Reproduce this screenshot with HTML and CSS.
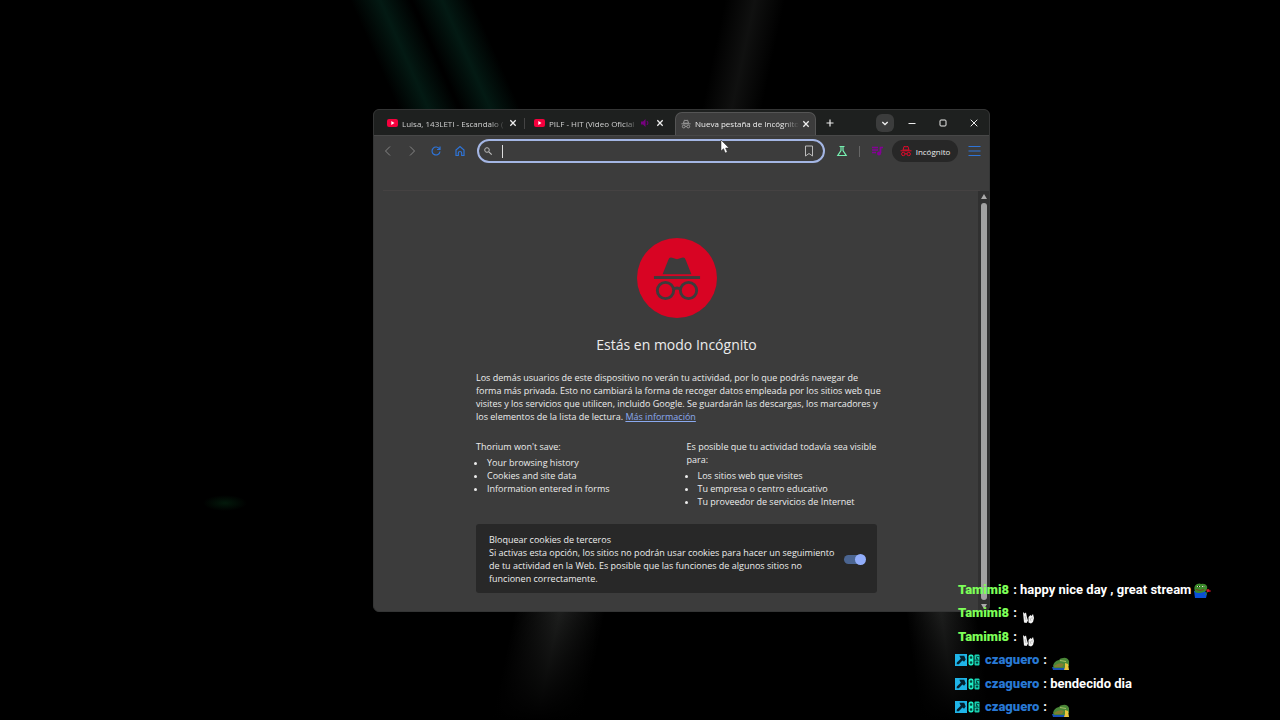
FILE: index.html
```html
<!DOCTYPE html>
<html lang="es">
<head>
<meta charset="utf-8">
<title>Nueva pestaña de Incógnito</title>
<link rel="stylesheet" href="styles.css">
</head>
<body>
<svg width="0" height="0" class="defs" aria-hidden="true">
  <symbol id="yt" viewBox="0 0 11 10"><rect y="1" width="11" height="8" rx="2" fill="#f5003d"/><path d="M4.3 3v4l3.2-2z" fill="#fff"/></symbol>
  <symbol id="x" viewBox="0 0 10 10"><path d="M2.3 2.3l5.4 5.4M7.7 2.3L2.3 7.7" stroke="currentColor" stroke-width="1.3" fill="none"/></symbol>
  <symbol id="spy" viewBox="0 0 50 46">
    <path d="M10 19L16 4q1-3 4-2l5 1.500l5-1.500q3-1 4 2l6 15z" fill="currentColor"/>
    <rect x="1" y="21" width="48" height="3" fill="currentColor"/>
    <g fill="none" stroke="currentColor" stroke-width="3"><circle cx="13" cy="36" r="8.500"/><circle cx="37" cy="36" r="8.500"/><path d="M21 35q4-3 8 0"/></g>
  </symbol>
  <symbol id="spy-small" viewBox="0 0 12 12">
    <path d="M3 5L4 1.500q2 .6 4 0L9 5z" fill="none" stroke="currentColor"/>
    <g fill="none" stroke="currentColor"><path d="M.5 5.800h11M5 9q1-.8 2 0"/><circle cx="3.300" cy="9" r="1.700"/><circle cx="8.700" cy="9" r="1.700"/></g>
  </symbol>
  <symbol id="hammer" viewBox="0 0 11 11"><rect width="11" height="11" fill="#1fb4e8"/><path d="M4 1.500h4.500L9.800 5 8.300 7 6.800 6 3.500 9.500 1.500 9.300 1.700 7.800 5.300 4.300z" fill="#04202e"/></symbol>
  <symbol id="dna" viewBox="0 0 12 12"><rect x=".5" y=".5" width="5" height="11" rx="2" fill="#1ff0c8"/><rect x="6.500" y=".5" width="5" height="11" rx="1" fill="#17cfb0"/><path d="M2.300 2.800h1.500v1.500H2.300zM2.300 7.800h1.500v1.500H2.300zM8.300 2.500h3M8.500 3v2.200h1.500M8.300 8h1.500v1.200H8.300zM6 6.200h5.500" fill="#033b35" stroke="#033b35" stroke-width=".8"/></symbol>
  <symbol id="frog-heart" viewBox="0 0 18 16"><path d="M1 8h11l2 3-1 4H2z" fill="#0a4fd6"/><path d="M2 9Q0 3 4 1q3-1 4 0 4-1 6 2 1 4-3 6-6 2-9 0z" fill="#3b8a2b"/><path d="M4 3.500h3M9 3.500h3" stroke="#dce8c8"/><path d="M5 3.500h1M10.500 3.500h1" stroke="#111"/><path d="M3 6.500q4 2 8 0" stroke="#7b3b20" fill="none"/><path d="M12 12l3-4" stroke="#3b8a2b"/><circle cx="15" cy="7.500" r="1.600" fill="#d51b2c"/><circle cx="16.800" cy="8" r="1" fill="#a50f20"/></symbol>
  <symbol id="hands" viewBox="0 0 14 13"><path d="M2 1l1.500 1.500L5 1.500l1 5 1 3-1.500 2.500-2.500-.5-.5-5zM7.500 6l2-2 1 1 1.500-2 1 4-1 4-2 1.500-2.500-1z" fill="#f2f2f2"/><path d="M4 5l1 4M9 7l1 3M11 6v2" stroke="#999" stroke-width=".6"/></symbol>
  <symbol id="frog-lay" viewBox="0 0 18 13"><path d="M0 10h15l2 3H1z" fill="#174fb5"/><path d="M1 9Q2 4 7 3q1-2 4-2 4-1 6 3v5l-5 2H2z" fill="#4a8738"/><path d="M2 9q5-4 10-2l-2 3H3z" fill="#827c32"/><path d="M8 3.500l6 1" stroke="#a5bf66"/><path d="M13 6l3 1 1 6h-5l1-3z" fill="#eac43d"/></symbol>
</svg>

<svg class="wallpaper" viewBox="0 0 1280 720" preserveAspectRatio="none" aria-hidden="true">
  <defs>
    <linearGradient id="green"><stop offset="0" stop-color="#042018" stop-opacity="0"/><stop offset=".5" stop-color="#042018" stop-opacity=".8"/><stop offset="1" stop-color="#042018" stop-opacity="0"/></linearGradient>
    <linearGradient id="gray"><stop offset="0" stop-color="#202120" stop-opacity="0"/><stop offset=".5" stop-color="#202120"/><stop offset="1" stop-color="#202120" stop-opacity="0"/></linearGradient>
    <linearGradient id="dark" x1="0" y1="0" x2="0" y2="1"><stop offset="0" stop-color="#000" stop-opacity="0"/><stop offset="1" stop-color="#000"/></linearGradient>
    <radialGradient id="spot"><stop offset="0" stop-color="#03190b"/><stop offset="1" stop-color="#03190b" stop-opacity="0"/></radialGradient>
  </defs>
  <rect x="350" y="0" width="60" height="130" fill="url(#green)" transform="skewX(24)"/>
  <rect x="412" y="0" width="60" height="130" fill="url(#green)" transform="skewX(24)"/>
  <rect x="725" y="0" width="60" height="130" fill="url(#gray)" opacity=".5" transform="skewX(-12)"/>
  <rect x="645" y="600" width="90" height="120" fill="url(#gray)" transform="skewX(-12)"/>
  <rect x="820" y="600" width="70" height="120" fill="url(#gray)" transform="skewX(8)"/>
  <rect x="440" y="600" width="560" height="120" fill="url(#dark)"/>
  <ellipse cx="225" cy="503" rx="22" ry="8" fill="url(#spot)"/>
</svg>

<main class="window">
  <header class="tabs">
    <div class="tab"><svg class="fav"><use href="#yt"/></svg><span class="title">Luisa, 143LETI - Escandalo (</span><button class="close" aria-label="Cerrar pestaña"><svg><use href="#x"/></svg></button></div>
    <div class="tab split"><svg class="fav"><use href="#yt"/></svg><span class="title">PILF - HIT (Video Oficial</span>
      <svg class="sound" viewBox="0 0 10 10"><path d="M1 3.500h2L5.500 1v8L3 6.500H1z" fill="#76007f"/><path d="M7 3q2 2 0 4" stroke="#76007f" fill="none"/></svg>
      <button class="close" aria-label="Cerrar pestaña"><svg><use href="#x"/></svg></button></div>
    <div class="tab active"><svg class="fav"><use href="#spy-small"/></svg><span class="title">Nueva pestaña de Incógnito</span><button class="close" aria-label="Cerrar pestaña"><svg><use href="#x"/></svg></button></div>
    <button class="plus" aria-label="Nueva pestaña"><svg viewBox="0 0 10 10"><path d="M5 1.500v7M1.500 5h7" stroke="currentColor" stroke-width="1.200"/></svg></button>
    <div class="controls">
      <button class="search-tabs" aria-label="Buscar pestañas"><svg viewBox="0 0 10 10"><path d="M2.300 4L5 6.500 7.700 4" stroke="currentColor" stroke-width="1.400" fill="none"/></svg></button>
      <button aria-label="Minimizar"><svg viewBox="0 0 10 10"><path d="M1.500 5.500h7" stroke="currentColor"/></svg></button>
      <button aria-label="Maximizar"><svg viewBox="0 0 10 10"><rect x="2" y="2" width="6" height="6" rx="1" fill="none" stroke="currentColor"/></svg></button>
      <button aria-label="Cerrar"><svg viewBox="0 0 10 10"><path d="M1.700 1.700l6.600 6.600M8.300 1.700L1.700 8.300" stroke="currentColor"/></svg></button>
    </div>
  </header>

  <nav class="toolbar">
    <button class="dim" aria-label="Atrás"><svg viewBox="0 0 12 12"><path d="M8 1.500L3.500 6 8 10.500" fill="none" stroke="currentColor"/></svg></button>
    <button class="dim" aria-label="Adelante"><svg viewBox="0 0 12 12"><path d="M4 1.500L8.500 6 4 10.500" fill="none" stroke="currentColor"/></svg></button>
    <button class="blue" aria-label="Recargar"><svg viewBox="0 0 12 12"><path d="M9.500 4A4 4 0 1 0 10 6.500M10 1.500V4.500H7" fill="none" stroke="currentColor" stroke-width="1.200"/></svg></button>
    <button class="blue" aria-label="Inicio"><svg viewBox="0 0 12 12"><path d="M2 10.500V5l4-3.500L10 5v5.500H7.700V8.200a1.700 1.700 0 0 0-3.400 0v2.300z" fill="none" stroke="currentColor" stroke-width="1.200"/></svg></button>
    <div class="omnibox">
      <svg viewBox="0 0 10 10"><circle cx="4" cy="4" r="2.300" fill="none" stroke="#bbb"/><path d="M5.800 5.800L8.700 8.700" stroke="#bbb" stroke-width="1.200"/></svg>
      <span class="caret"></span>
      <input type="text" aria-label="Barra de direcciones">
      <button aria-label="Añadir marcador"><svg viewBox="0 0 12 12"><path d="M2.500 1h7v10L6 8.500 2.500 11z" fill="none" stroke="#bbb"/></svg></button>
    </div>
    <button class="green" aria-label="Experimentos"><svg viewBox="0 0 12 12"><path d="M3.500 1.500h5M5 1.500v4L1.800 10.500h8.400L7 5.500v-4" fill="none" stroke="currentColor" stroke-width="1.200"/></svg></button>
    <span class="rule"></span>
    <button class="purple" aria-label="Control multimedia"><svg viewBox="0 0 12 12"><path d="M1 2.500h6M1 5h6M1 7.500h4M9.500 8V2.500H12" fill="none" stroke="currentColor" stroke-width="1.700"/><circle cx="8" cy="8.500" r="2" fill="currentColor"/></svg></button>
    <button class="profile"><svg><use href="#spy-small"/></svg>Incógnito</button>
    <button class="blue menu" aria-label="Menú"><svg viewBox="0 0 12 12"><path d="M0 1.500h12M0 6h12M0 10.500h12" stroke="currentColor"/></svg></button>
  </nav>
  <div class="bookmarks"></div>

  <div class="page">
    <section class="content">
      <div class="logo"><svg><use href="#spy"/></svg></div>
      <h1>Estás en modo Incógnito</h1>
      <p class="intro">Los demás usuarios de este dispositivo no verán tu actividad, por lo que podrás navegar de<br>forma más privada. Esto no cambiará la forma de recoger datos empleada por los sitios web que<br>visites y los servicios que utilicen, incluido Google. Se guardarán las descargas, los marcadores y<br>los elementos de la lista de lectura. <a href="#">Más información</a></p>
      <div class="columns">
        <div><p>Thorium <em>won't save:</em></p><ul><li>Your browsing history</li><li>Cookies and site data</li><li>Information entered in forms</li></ul></div>
        <div><p>Es posible que tu actividad <em>todavía sea visible</em><br>para:</p><ul><li>Los sitios web que visites</li><li>Tu empresa o centro educativo</li><li>Tu proveedor de servicios de Internet</li></ul></div>
      </div>
      <div class="cookies">
        <label for="block"><em>Bloquear cookies de terceros</em><br>Si activas esta opción, los sitios no podrán usar cookies para hacer un seguimiento<br>de tu actividad en la Web. Es posible que las funciones de algunos sitios no<br>funcionen correctamente.</label>
        <input id="block" class="switch" type="checkbox" role="switch" checked>
      </div>
    </section>
    <div class="scroll" aria-hidden="true"><i class="up"></i><i class="thumb"></i><i class="down"></i></div>
  </div>
</main>

<svg class="cursor" viewBox="0 0 10 14" aria-hidden="true"><path d="M1 0v11l2.500-2.300L5.300 13l2-.9L5.600 8H9z" fill="#fff" stroke="#222" stroke-width=".5"/></svg>

<aside class="chat">
  <div class="msg plain"><b class="lime">Tamimi8</b><span>: happy nice day , great stream</span><svg class="big"><use href="#frog-heart"/></svg></div>
  <div class="msg plain"><b class="lime">Tamimi8</b><span>:</span><svg class="hand"><use href="#hands"/></svg></div>
  <div class="msg plain"><b class="lime">Tamimi8</b><span>:</span><svg class="hand"><use href="#hands"/></svg></div>
  <div class="msg"><svg class="badge"><use href="#hammer"/></svg><svg class="badge"><use href="#dna"/></svg><b class="azure">czaguero</b><span>:</span><svg class="frog"><use href="#frog-lay"/></svg></div>
  <div class="msg"><svg class="badge"><use href="#hammer"/></svg><svg class="badge"><use href="#dna"/></svg><b class="azure">czaguero</b><span>: bendecido dia</span></div>
  <div class="msg"><svg class="badge"><use href="#hammer"/></svg><svg class="badge"><use href="#dna"/></svg><b class="azure">czaguero</b><span>:</span><svg class="frog"><use href="#frog-lay"/></svg></div>
</aside>
</body>
</html>
```
FILE: styles.css
```css
* { box-sizing: border-box; }
html, body { height: 100%; }
body {
  margin: 0;
  position: relative;
  overflow: hidden;
  background: #000;
  color: #ececec;
  font: 9px/13px "Open Sans", "Noto Sans", sans-serif;
}
button { display: flex; align-items: center; justify-content: center; padding: 0; border: 0; background: none; color: inherit; font: inherit; }
svg { display: block; flex: none; }
em { font-style: normal; font-weight: 500; }
.defs { position: absolute; }
.wallpaper { position: absolute; inset: 0; width: 100%; height: 100%; }

.window {
  position: absolute;
  inset: 109px 290px auto 373px;
  border: 1px solid #343535;
  border-radius: 6px;
  overflow: hidden;
  background: #3c3c3c;
}

.tabs { display: flex; align-items: flex-end; gap: 6px; height: 25px; padding-left: 7px; background: #1e201f; }
.tab { display: flex; align-items: center; position: relative; width: 141px; height: 23px; padding: 0 4px 1px 6px; color: #d0d0d0; font-size: 8px; }
.tab.active { background: #3c3c3c; border: 1px solid #555; border-bottom: 0; border-radius: 7px 7px 0 0; padding: 0 4px 1px 5px; color: #ececec; }
.tab.split::before { content: ""; position: absolute; left: -4px; top: 6px; width: 1px; height: 11px; background: #444; }
.fav { width: 11px; height: 10px; margin-right: 4px; }
.active .fav { width: 10px; color: #aaa; }
.title { flex: 1; min-width: 0; white-space: nowrap; -webkit-mask-image: linear-gradient(90deg, #000 85%, transparent); mask-image: linear-gradient(90deg, #000 85%, transparent); }
.sound { width: 10px; height: 10px; margin: 0 5px 0 2px; }
.close { width: 10px; height: 10px; margin-left: 2px; color: #eee; }
.sound + .close { margin-left: 0; }
.close svg, .plus svg, .controls svg { width: 10px; height: 10px; }
.plus { width: 16px; height: 24px; }
.controls { display: flex; align-items: center; gap: 5px; height: 24px; margin-left: auto; padding-right: 2px; }
.controls button { width: 26px; height: 18px; }
.controls .search-tabs { width: 18px; border-radius: 6px; background: #3b3c3c; }

.toolbar { display: flex; align-items: center; height: 31px; padding: 0 3px 0 2px; border-top: 1px solid #484848; }
.toolbar > button { width: 24px; height: 22px; }
.toolbar svg { width: 12px; height: 12px; }
.dim { color: #858585; }
.blue { color: #2e74d8; }
.green { color: #76efb0; }
.purple { color: #850096; }
.omnibox { display: flex; align-items: center; flex: 1; height: 24px; margin: 0 5px; padding: 0 8px 0 4px; border: 2px solid #a4b6e4; border-radius: 12px; }
.omnibox > svg { width: 10px; height: 10px; }
.caret { width: 1px; height: 13px; margin-left: 9px; background: #ddd; }
.omnibox input { flex: 1; min-width: 0; border: 0; outline: 0; background: none; color: inherit; font: inherit; }
.rule { width: 1px; height: 11px; margin: 0 5px; background: #666; }
.toolbar .profile { width: 66px; margin: 0 4px 0 3px; gap: 4px; border-radius: 11px; background: #272727; font-size: 8px; }
.profile svg { color: #e20a2b; }
.toolbar .menu svg { width: 13px; }
.bookmarks { height: 25px; margin: 0 9px; border-bottom: 1px solid #454242; }

.page { display: flex; }
.content { flex: 1; min-width: 0; padding: 47px 101px 18px 102px; }
.logo { display: flex; justify-content: center; align-items: center; width: 80px; height: 80px; margin: 0 auto; border-radius: 50%; background: #d80423; color: #3c3c3c; }
.logo svg { width: 48px; height: 46px; }
h1 { margin: 17px 0 16px; font-size: 14px; line-height: 20px; font-weight: 400; text-align: center; }
p { margin: 0; }
.intro { white-space: nowrap; }
a { color: #8aa9ef; }
.columns { display: grid; grid-template-columns: 1fr 1fr; gap: 20px; margin: 17px 0 16px; white-space: nowrap; }
ul { margin: 3px 0 0; padding-left: 11px; }
.cookies { display: flex; align-items: center; justify-content: space-between; padding: 9px 12px 8px 13px; border-radius: 3px; background: #282828; white-space: nowrap; }
.switch { appearance: none; position: relative; width: 21px; height: 9px; margin: 0; border-radius: 5px; background: #4b6591; }
.switch::after { content: ""; position: absolute; right: -1px; top: -1px; width: 11px; height: 11px; border-radius: 50%; background: #91adfa; }
.scroll { display: flex; flex: none; flex-direction: column; align-items: center; gap: 4px; width: 11px; padding: 3px 0 2px; background: #303030; }
.up, .down { border: 3px solid transparent; }
.up { border-top: 0; border-bottom: 5px solid #aaa; }
.down { border-bottom: 0; border-top: 5px solid #aaa; }
.thumb { flex: 1; width: 6px; border-radius: 3px; background: #a2a2a2; }

.cursor { position: absolute; left: 720px; top: 140px; width: 10px; height: 14px; }

.chat { position: absolute; left: 955px; top: 578px; bottom: 1px; display: flex; flex-direction: column; color: #fff; font: 700 13px/18px Roboto, sans-serif; }
.msg { display: flex; flex: 1; align-items: center; white-space: nowrap; }
.msg.plain { padding-left: 3px; }
.msg b { margin-right: 4px; }
.lime { color: #7dff58; }
.azure { color: #2878d4; margin-left: 4px; }
.badge { width: 12px; height: 12px; margin-right: 1px; }
.big { width: 18px; height: 16px; margin: 3px 0 0 2px; }
.hand { width: 14px; height: 13px; margin: 8px 0 0 4px; }
.frog { width: 18px; height: 13px; margin: 6px 0 0 5px; }
```
